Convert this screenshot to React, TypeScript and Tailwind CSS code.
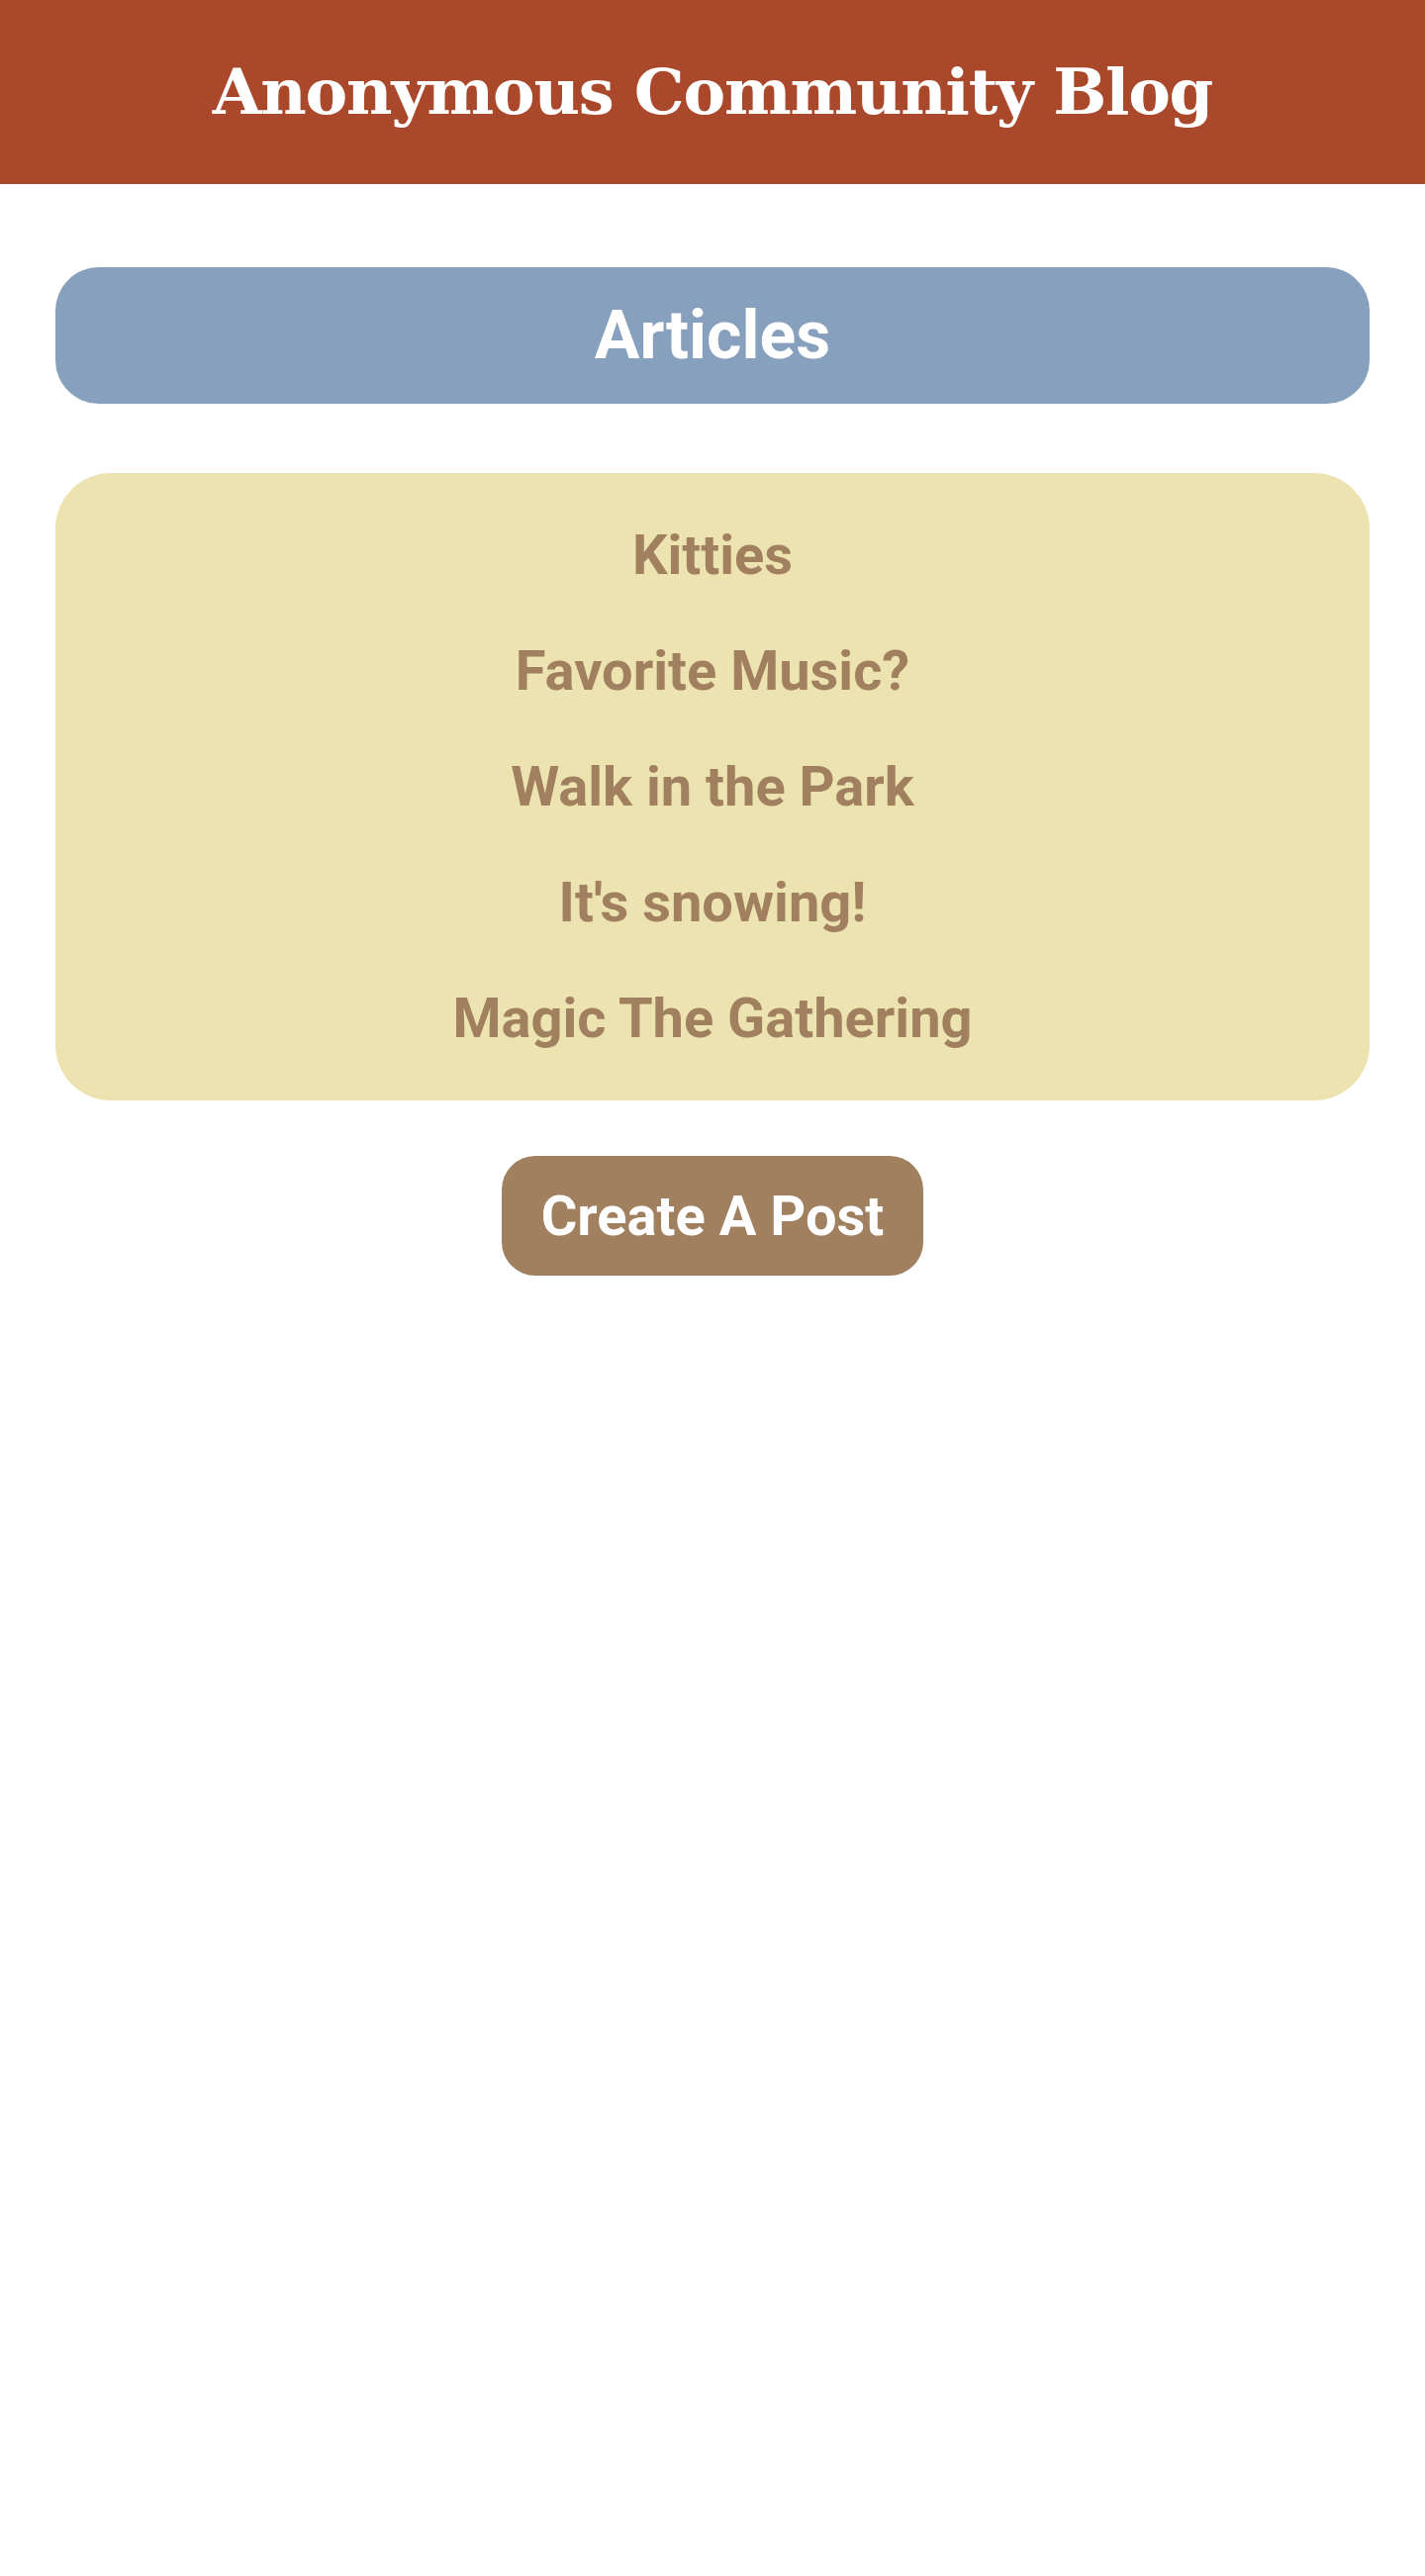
const articles = ['Kitties', 'Favorite Music?', 'Walk in the Park', "It's snowing!", 'Magic The Gathering'];

export default function App() {
  return (
    <div className="min-h-[2603px] bg-white font-['Roboto',sans-serif]">
      {/* Header */}
      <header className="flex h-[186px] items-center justify-center bg-[#aa482b]">
        <h1 className="font-['DejaVu_Serif','Liberation_Serif',serif] text-[64px] font-bold leading-none tracking-[-1.2px] text-white">
          Anonymous Community Blog
        </h1>
      </header>

      <main className="px-[56px] pt-[84px]">
        {/* Section title */}
        <div className="flex h-[138px] items-center justify-center rounded-[44px] bg-[#87a0be]">
          <h2 className="text-[68px] font-bold leading-[80px] text-white">Articles</h2>
        </div>

        {/* Article list */}
        <ul className="mt-[70px] flex flex-col items-center gap-[51px] rounded-[56px] bg-[#ece3b0] py-[50px]">
          {articles.map((title) => (
            <li key={title} className="text-[56px] leading-[66px]">
              <a href="#" className="font-bold text-[#a0805f]">
                {title}
              </a>
            </li>
          ))}
        </ul>

        <div className="mt-[56px] flex justify-center">
          <button className="flex h-[121px] items-center rounded-[34px] bg-[#a0805f] px-[40px] text-[56px] font-bold leading-[66px] text-white">
            Create A Post
          </button>
        </div>
      </main>
    </div>
  );
}
